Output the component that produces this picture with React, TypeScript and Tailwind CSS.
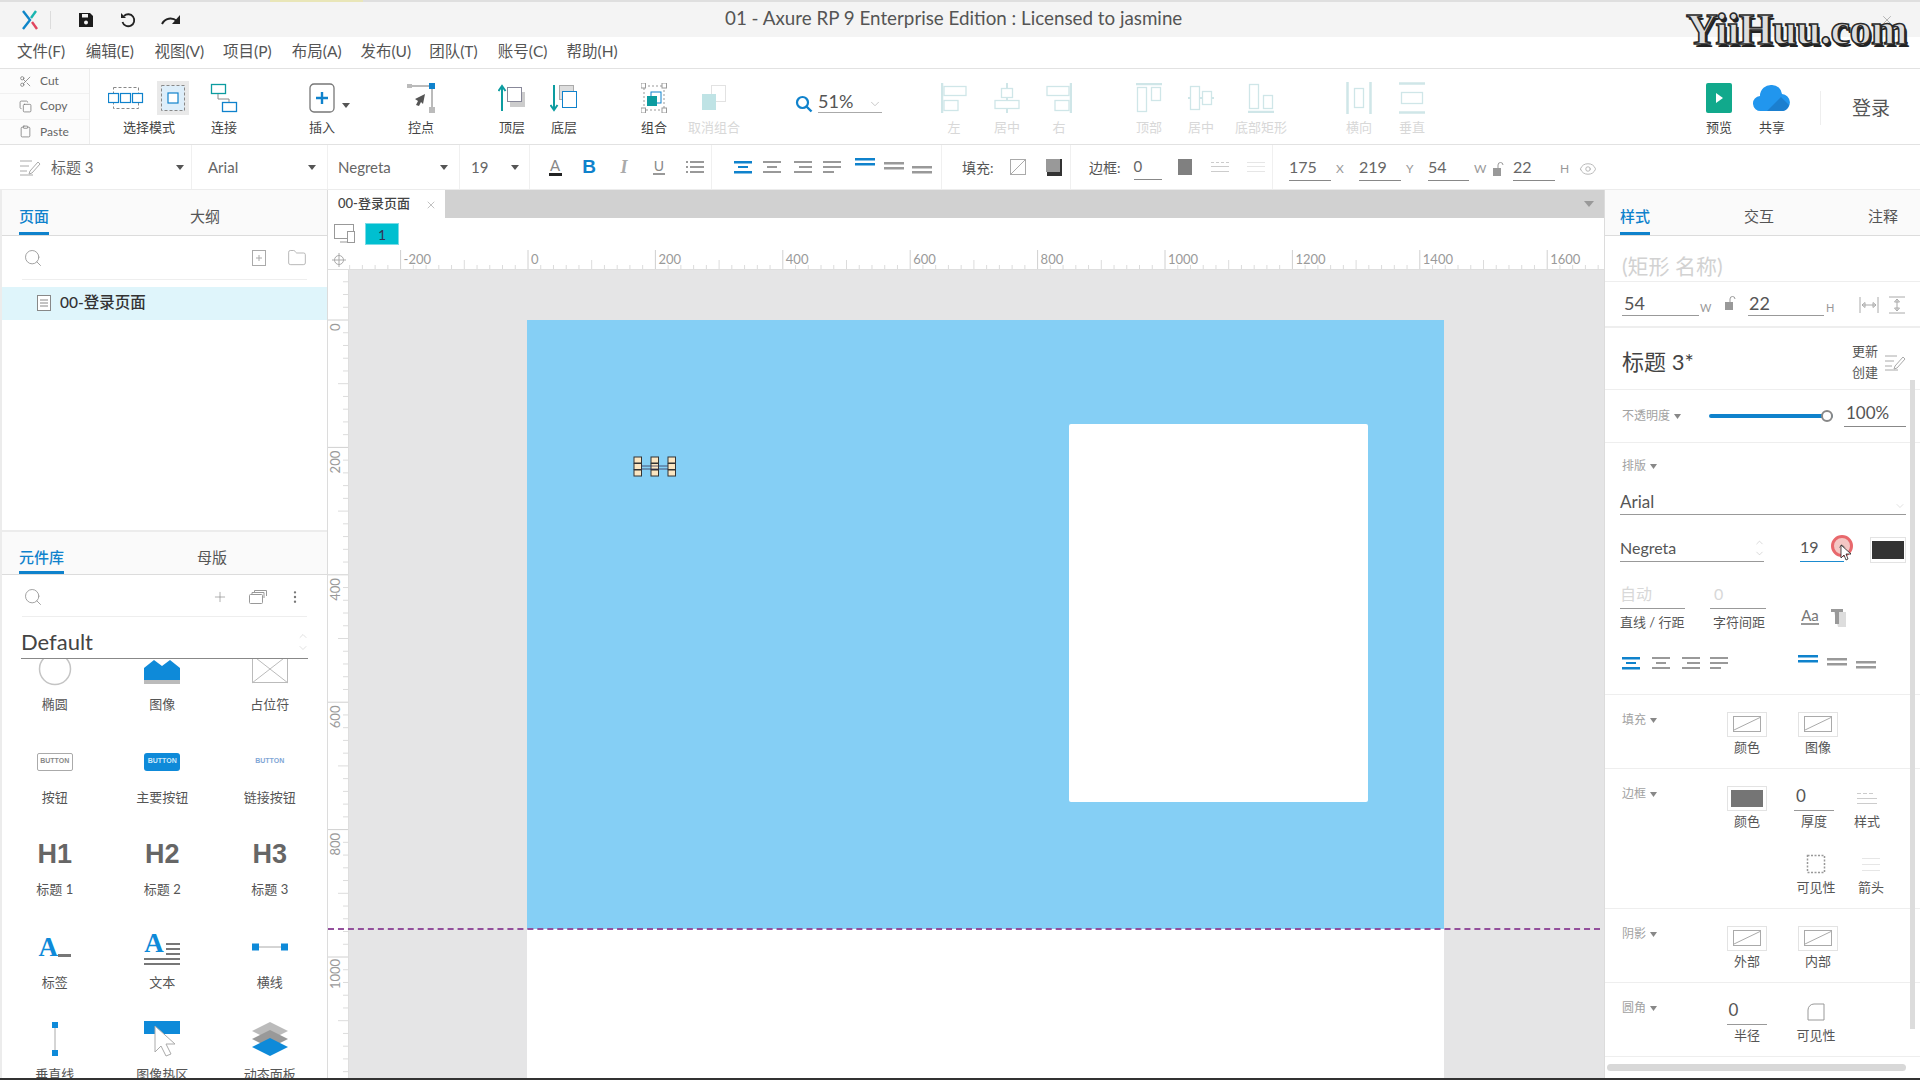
import React from "react";
import { Search, Plus, Eye, Folder, Scissors, Copy, Clipboard, ChevronDown, ChevronUp, EllipsisVertical, X } from "lucide-react";

const BLUE = "#0f82cc";
const TEAL = "#0c9ca0";
const FAINT = "#cfe6e8";

const Caret = ({ className = "" }: { className?: string }) => (
  <svg width="8" height="5" viewBox="0 0 8 5" className={className}><path d="M0 0h8L4 5z" fill="#555" /></svg>
);

const SmallCaret = () => (
  <svg width="7" height="5" viewBox="0 0 7 5" className="ml-[4px] inline-block align-middle"><path d="M0 0h7L3.5 5z" fill="#888" /></svg>
);

const Tool = ({ label, className = "", disabled = false, children }: { label: string; className?: string; disabled?: boolean; children: React.ReactNode }) => (
  <div className={`flex flex-col items-center shrink-0 w-[52px] ${className}`}>
    <div className="h-[38px] mt-[10px] flex items-center justify-center">{children}</div>
    <span className={`mt-[1px] text-[13px] leading-[18px] whitespace-nowrap ${disabled ? "text-[#d8d8d8]" : "text-[#444]"}`}>{label}</span>
  </div>
);

const Lines = ({ rows, color, w = 20 }: { rows: number[][]; color: string; w?: number }) => (
  <svg width={w} height="16" viewBox={`0 0 ${w} 16`}>
    {rows.map((r, i) => (
      <rect key={i} x={r[0]} y={r[1]} width={r[2]} height={r[3] ?? 2} fill={color} />
    ))}
  </svg>
);

const AlignL = ({ color }: { color: string }) => <Lines color={color} rows={[[1, 2, 18, 2.5], [5, 7, 10, 2], [1, 12, 18, 2.5]]} />;
const AlignC = ({ color }: { color: string }) => <Lines color={color} rows={[[1, 2, 18, 2], [5, 7, 10, 2], [1, 12, 18, 2]]} />;
const AlignR = ({ color }: { color: string }) => <Lines color={color} rows={[[1, 2, 18, 2], [6, 7, 13, 2], [1, 12, 18, 2]]} />;
const AlignJ = ({ color }: { color: string }) => <Lines color={color} rows={[[1, 2, 18, 2], [1, 7, 18, 2], [1, 12, 11, 2]]} />;
const VAlign = ({ color }: { color: string }) => <Lines color={color} rows={[[0, 3, 20, 2.5], [0, 8, 20, 2.5]]} />;

const NoFill = ({ w = 28, h = 16 }: { w?: number; h?: number }) => (
  <svg width={w} height={h} viewBox={`0 0 ${w} ${h}`}>
    <rect x=".5" y=".5" width={w - 1} height={h - 1} fill="#fff" stroke="#aaa" />
    <path d={`M1 ${h - 2}L${w - 1} 1.5`} stroke="#aaa" />
  </svg>
);

const Field = ({ value, className = "", text = "text-[#555]" }: { value: string; className?: string; text?: string }) => (
  <div className={`border-b border-[#999] h-[24px] leading-[22px] text-[17px] ${text} ${className}`}>{value}</div>
);

const Swatch = ({ children }: { children: React.ReactNode }) => (
  <div className="w-[40px] h-[25px] border border-[#e3e3e3] flex items-center justify-center bg-white">{children}</div>
);

const Cell = ({ label, children, className = "" }: { label: string; children: React.ReactNode; className?: string }) => (
  <div className={`w-[60px] shrink-0 flex flex-col items-center ${className}`}>
    <div className="h-[28px] flex items-center justify-center w-full">{children}</div>
    <span className="text-[13px] leading-[18px] text-[#555] whitespace-nowrap">{label}</span>
  </div>
);

const SecTitle = ({ title }: { title: string }) => (
  <div className="w-[112px] shrink-0 pl-[17px] pt-[2px] text-[12px] leading-[16px] text-[#a2a2a2]">
    {title}
    <SmallCaret />
  </div>
);

const Item = ({ label, children }: { label: string; children: React.ReactNode }) => (
  <div className="h-[92.5px] flex flex-col items-center shrink-0">
    <div className="mt-[24px] h-[32px] flex items-center justify-center">{children}</div>
    <span className="mt-[10px] text-[13px] leading-[18px] text-[#555] whitespace-nowrap">{label}</span>
  </div>
);

const HRuler = () => {
  const zero = 179;
  const step = 127.4 / 10;
  const ticks = Array.from({ length: 100 }, (_, i) => i - 14);
  return (
    <svg width="1255" height="20" className="block">
      {ticks.map((i) => {
        const x = zero + i * step;
        if (x < 0) return null;
        const major = i % 10 === 0;
        const mid = i % 5 === 0;
        return <line key={i} x1={x} x2={x} y1={major ? 0 : mid ? 10 : 15} y2={20} stroke={major ? "#d0d0d0" : "#dcdcdc"} />;
      })}
      {[-200, 0, 200, 400, 600, 800, 1000, 1200, 1400, 1600].map((v) => (
        <text key={v} x={zero + (v / 200) * 127.4 + 3} y={14} fontSize="13" fill="#9a9a9a" fontFamily="Lato">{v}</text>
      ))}
      <line x1="0" x2="1255" y1="19.5" y2="19.5" stroke="#dedede" />
    </svg>
  );
};

const VRuler = () => {
  const zero = 50;
  const step = 127.4 / 10;
  const ticks = Array.from({ length: 70 }, (_, i) => i - 3);
  return (
    <svg width="21" height="808" className="block">
      {ticks.map((i) => {
        const y = zero + i * step;
        const major = i % 10 === 0;
        const mid = i % 5 === 0;
        return <line key={i} y1={y} y2={y} x1={major ? 0 : mid ? 10 : 15} x2={21} stroke={major ? "#d0d0d0" : "#dcdcdc"} />;
      })}
      {[0, 200, 400, 600, 800, 1000].map((v) => (
        <text key={v} transform={`translate(12 ${zero + (v / 200) * 127.4 + 26 + (v >= 1000 ? 6 : v === 0 ? -15 : 0)}) rotate(-90)`} fontSize="13" fill="#9a9a9a" fontFamily="Lato">{v}</text>
      ))}
      <line x1="20.5" x2="20.5" y1="0" y2="808" stroke="#dedede" />
    </svg>
  );
};

const PanelTab = ({ label, active = false, className = "" }: { label: string; active?: boolean; className?: string }) => (
  <div className={`h-full flex items-center pt-[11px] border-b-[3px] text-[15px] ${active ? "border-[#0f82cc] text-[#0f82cc] font-medium" : "border-transparent text-[#555]"} ${className}`}>{label}</div>
);

export default function App() {
  return (
    <div className="w-[1920px] h-[1080px] overflow-hidden relative flex flex-col bg-white font-['Lato','Noto_Sans_CJK_SC',sans-serif] text-[#444]">
      {/* Title bar */}
      <div className="h-[37px] shrink-0 bg-[#f4f4f4] border-t-[2px] border-[#dfdfdf] flex items-center relative">
        <svg width="22" height="22" viewBox="0 0 22 22" className="ml-[19px]">
          <path d="M4 2l7 9-7 9" fill="none" stroke="#0f86c9" strokeWidth="2.4" />
          <path d="M17 2l-5 7" fill="none" stroke="#19b5b0" strokeWidth="2.4" />
          <path d="M13 13l5 7" fill="none" stroke="#e0455f" strokeWidth="2.4" />
        </svg>
        <div className="ml-[9px] w-px h-[18px] bg-[#dcdcdc]" />
        <svg width="16" height="16" viewBox="0 0 16 16" className="ml-[27px]">
          <path d="M1 1h11l3 3v11H1z" fill="#1c1c1c" />
          <rect x="4" y="2" width="6" height="3.5" fill="#f4f4f4" />
          <circle cx="8" cy="10.5" r="2" fill="#f4f4f4" />
        </svg>
        <svg width="18" height="18" viewBox="0 0 18 18" className="ml-[25px]">
          <path d="M5 5a6 6 0 1 1-1.5 6" fill="none" stroke="#222" strokeWidth="1.8" />
          <path d="M2 2v5h5z" fill="#222" />
        </svg>
        <svg width="22" height="14" viewBox="0 0 22 14" className="ml-[23px]">
          <path d="M2 11c3-6 10-7 15-3" fill="none" stroke="#222" strokeWidth="2" />
          <path d="M20 2v9h-8z" fill="#222" />
        </svg>
        <div className="absolute left-[725px] top-[4px] w-[456px] text-center text-[18.8px] leading-[24px] text-[#555] whitespace-nowrap">01 - Axure RP 9 Enterprise Edition : Licensed to jasmine</div>
        <div className="absolute left-[270px] -top-[2px] w-[93px] h-[2px] bg-[#e9e6b8]" />
      </div>

      {/* Menu bar */}
      <div className="h-[32px] shrink-0 border-b border-[#e2e2e2] flex items-center pl-[17px] pb-[2px] text-[15.5px] text-[#555]">
        {["文件(F)", "编辑(E)", "视图(V)", "项目(P)", "布局(A)", "发布(U)", "团队(T)", "账号(C)", "帮助(H)"].map((m) => (
          <span key={m} className="w-[68.7px] shrink-0 whitespace-nowrap">{m}</span>
        ))}
      </div>

      {/* Toolbar */}
      <div className="h-[76px] shrink-0 border-b border-[#e2e2e2] flex">
        <div className="w-[90px] shrink-0 border-r border-[#ececec] flex flex-col text-[12px] text-[#666]">
          {[["Cut", Scissors], ["Copy", Copy], ["Paste", Clipboard]].map(([t, I]: any) => (
            <div key={t} className="flex-1 flex items-center gap-[8px] pl-[19px] border-b border-[#f1f1f1] last:border-b-0 bg-[#fcfcfc]">
              <I size={13} strokeWidth={1.4} color="#777" />
              <span>{t}</span>
            </div>
          ))}
        </div>

        <Tool label="选择模式" className="ml-[10px] w-[98px]">
          <div className="flex items-center gap-[13px] -ml-[2px]">
            <svg width="36" height="30" viewBox="0 0 36 30">
              <rect x="5.5" y="4.5" width="25" height="21" fill="none" stroke="#888" strokeDasharray="3 2" />
              {[0.5, 12.5, 24.5].map((x) => <rect key={x} x={x} y="10.5" width="10" height="9" fill="#fff" stroke={BLUE} strokeWidth="1.2" />)}
            </svg>
            <div className="w-[32px] h-[34px] bg-[#e9e9e9] flex items-center justify-center">
              <svg width="26" height="28" viewBox="0 0 26 28">
                <rect x="1.5" y="1.5" width="23" height="25" fill="#ddeefa" stroke="#888" strokeDasharray="3 2" />
                <rect x="8" y="9" width="10" height="10" fill="#fff" stroke={BLUE} strokeWidth="1.2" />
              </svg>
            </div>
          </div>
        </Tool>
        <Tool label="连接">
          <svg width="28" height="30" viewBox="0 0 28 30">
            <rect x="1.5" y="1.5" width="14" height="9" fill="none" stroke={TEAL} strokeWidth="1.3" />
            <rect x="12.5" y="19.5" width="14" height="9" fill="none" stroke={BLUE} strokeWidth="1.3" />
            <path d="M8 11v5h11v3" fill="none" stroke="#888" />
          </svg>
        </Tool>
        <Tool label="插入" className="ml-[46px] relative">
          <svg width="26" height="30" viewBox="0 0 26 30">
            <rect x="1" y="1" width="24" height="28" rx="4" fill="#fff" stroke="#777" strokeWidth="1.3" />
            <path d="M13 9v12M7 15h12" stroke={BLUE} strokeWidth="2.4" />
          </svg>
          <Caret className="absolute left-[46px] top-[34px]" />
        </Tool>
        <Tool label="控点" className="ml-[47px]">
          <svg width="28" height="30" viewBox="0 0 28 30">
            <path d="M3 3h22v24" fill="none" stroke="#777" />
            <rect x="0" y="1" width="5" height="4" fill="#bbb" />
            <rect x="22" y="0" width="6" height="6" fill={BLUE} />
            <rect x="22" y="24" width="6" height="6" fill="#bbb" />
            <path d="M18 11L8 16l3 2-2 4 3 1 2-4 2 2z" fill="#555" />
          </svg>
        </Tool>
        <Tool label="顶层" className="ml-[39px]">
          <svg width="28" height="28" viewBox="0 0 28 28">
            <rect x="12" y="8" width="15" height="15" fill="#ccc" />
            <rect x="9.5" y="3.5" width="14" height="14" fill="#fff" stroke="#889" />
            <path d="M4 27V3M0.5 7L4 2l3.5 5" fill="none" stroke={TEAL} strokeWidth="2" />
          </svg>
        </Tool>
        <Tool label="底层">
          <svg width="28" height="28" viewBox="0 0 28 28">
            <rect x="9.5" y="1.5" width="14" height="14" fill="#ddd" stroke="#aaa" />
            <rect x="12.5" y="7.5" width="14" height="16" fill="#fff" stroke={BLUE} />
            <path d="M4 1v24M0.5 21L4 26l3.5-5" fill="none" stroke={TEAL} strokeWidth="2" />
          </svg>
        </Tool>
        <Tool label="组合" className="ml-[38px]">
          <svg width="26" height="30" viewBox="0 0 26 30">
            <rect x="3" y="3" width="20" height="24" fill="none" stroke="#999" strokeDasharray="2 2" />
            {[[0, 0], [21, 0], [0, 25], [21, 25]].map(([x, y]) => <rect key={`${x}${y}`} x={x} y={y} width="4.5" height="5" fill="#fff" stroke="#999" />)}
            <rect x="10" y="9" width="10" height="11" fill="#fff" stroke={BLUE} />
            <rect x="6" y="13" width="10" height="10" fill={TEAL} />
          </svg>
        </Tool>
        <Tool label="取消组合" disabled className="w-[68px]">
          <svg width="26" height="30" viewBox="0 0 26 30">
            <rect x="10.5" y="2.5" width="14" height="16" fill="#fff" stroke="#e2e2e2" />
            <rect x="1" y="11" width="14" height="16" fill="#bfe3e5" />
          </svg>
        </Tool>

        <div className="ml-[47px] w-[87px] shrink-0 flex flex-col">
          <div className="mt-[20px] h-[24px] flex items-center">
            <svg width="18" height="18" viewBox="0 0 18 18" className="mt-[5px]">
              <circle cx="7.5" cy="7.5" r="5.5" fill="none" stroke={BLUE} strokeWidth="2.2" />
              <path d="M11.5 11.5l5 5" stroke={BLUE} strokeWidth="2.4" />
            </svg>
            <div className="ml-[5px] flex-1 flex items-center justify-between border-b border-[#aaa] h-[24px] text-[18px] leading-[22px] text-[#555]">
              51%
              <ChevronDown size={14} color="#bbb" strokeWidth={1.4} className="mt-[6px]" />
            </div>
          </div>
        </div>

        <Tool label="左" disabled className="ml-[46px]">
          <svg width="26" height="30" viewBox="0 0 26 30"><path d="M1 0v30" stroke={FAINT} strokeWidth="2.5" /><rect x="3" y="3.5" width="22" height="9" fill="none" stroke={FAINT} strokeWidth="1.3" /><rect x="3" y="17.5" width="14" height="10" fill="none" stroke={FAINT} strokeWidth="1.3" /></svg>
        </Tool>
        <Tool label="居中" disabled className="ml-[1px]">
          <svg width="26" height="30" viewBox="0 0 26 30"><path d="M13 0v30" stroke={FAINT} strokeWidth="2" /><rect x="7.5" y="5.5" width="11" height="9" fill="#fff" stroke={FAINT} strokeWidth="1.3" /><rect x="1" y="17.5" width="24" height="8" fill="#fff" stroke={FAINT} strokeWidth="1.3" /></svg>
        </Tool>
        <Tool label="右" disabled>
          <svg width="26" height="30" viewBox="0 0 26 30"><path d="M25 0v30" stroke={FAINT} strokeWidth="2.5" /><rect x="1" y="3.5" width="22" height="9" fill="none" stroke={FAINT} strokeWidth="1.3" /><rect x="9" y="17.5" width="14" height="10" fill="none" stroke={FAINT} strokeWidth="1.3" /></svg>
        </Tool>
        <Tool label="顶部" disabled className="ml-[38px]">
          <svg width="26" height="30" viewBox="0 0 26 30"><path d="M0 1h26" stroke={FAINT} strokeWidth="2.5" /><rect x="1.5" y="4.5" width="9" height="24" fill="none" stroke={FAINT} strokeWidth="1.3" /><rect x="15.5" y="4.5" width="9" height="13" fill="none" stroke={FAINT} strokeWidth="1.3" /></svg>
        </Tool>
        <Tool label="居中" disabled>
          <svg width="26" height="30" viewBox="0 0 26 30"><path d="M0 15h26" stroke={FAINT} strokeWidth="2" /><rect x="2.5" y="3.5" width="9" height="23" fill="#fff" stroke={FAINT} strokeWidth="1.3" /><rect x="14.5" y="8.5" width="9" height="13" fill="#fff" stroke={FAINT} strokeWidth="1.3" /></svg>
        </Tool>
        <Tool label="底部矩形" disabled className="w-[68px]">
          <svg width="26" height="30" viewBox="0 0 26 30"><path d="M0 29h26" stroke={FAINT} strokeWidth="2.5" /><rect x="1.5" y="1.5" width="9" height="24" fill="none" stroke={FAINT} strokeWidth="1.3" /><rect x="15.5" y="12.5" width="9" height="13" fill="none" stroke={FAINT} strokeWidth="1.3" /></svg>
        </Tool>
        <Tool label="横向" disabled className="ml-[38px]">
          <svg width="26" height="32" viewBox="0 0 26 32"><path d="M1.5 0v32M24.5 0v32" stroke={FAINT} strokeWidth="2.5" /><rect x="8.5" y="6.5" width="9" height="19" fill="none" stroke={FAINT} strokeWidth="1.3" /></svg>
        </Tool>
        <Tool label="垂直" disabled className="ml-[1px]">
          <svg width="26" height="32" viewBox="0 0 26 32"><path d="M0 1.5h26M0 30.5h26" stroke={FAINT} strokeWidth="2.5" /><rect x="2.5" y="10.5" width="21" height="11" fill="none" stroke={FAINT} strokeWidth="1.3" /></svg>
        </Tool>
        <Tool label="预览" className="ml-[255px]">
          <svg width="26" height="30" viewBox="0 0 26 30"><rect width="26" height="30" rx="2" fill="#11a98c" /><path d="M10 10l7 5-7 5z" fill="#fff" /></svg>
        </Tool>
        <Tool label="共享" className="ml-[1px]">
          <svg width="38" height="28" viewBox="0 0 38 28"><path d="M8 27a7.5 7.5 0 0 1-1-15A11 11 0 0 1 19 1a10 10 0 0 1 10 9 8.6 8.6 0 0 1 1 17z" fill="#2196ee" /><path d="M30 27H14L28 13l8 8a8 8 0 0 1-6 6z" fill="#1b7fcf" /></svg>
        </Tool>
        <div className="ml-[22px] mt-[22px] h-[34px] w-px bg-[#eeeeee]" />
        <div className="ml-[31px] mt-[27px] text-[19px] leading-[24px] text-[#555] whitespace-nowrap">登录</div>
      </div>

      {/* Format bar */}
      <div className="h-[45px] shrink-0 border-b border-[#ececec] flex items-center text-[15px] text-[#666]">
        <div className="w-[192px] h-full shrink-0 flex items-center pl-[19px] border-r border-[#f0f0f0]">
          <svg width="22" height="18" viewBox="0 0 22 18"><path d="M1 3h12M1 8h9M1 13h7M1 17h13M11 13l8-9 2 2-8 9-3 1z" fill="none" stroke="#aaa" /></svg>
          <span className="ml-[10px] w-[44px] whitespace-nowrap">标题 3</span>
          <Caret className="ml-[81px]" />
        </div>
        <div className="w-[136px] h-full shrink-0 flex items-center pl-[16px] border-r border-[#f0f0f0]"><span className="w-[33px]">Arial</span><Caret className="ml-[67px]" /></div>
        <div className="w-[132px] h-full shrink-0 flex items-center pl-[10px] border-r border-[#f0f0f0]"><span className="w-[54px]">Negreta</span><Caret className="ml-[48px]" /></div>
        <div className="w-[70px] h-full shrink-0 flex items-center pl-[11px] border-r border-[#f0f0f0]"><span className="w-[17px]">19</span><Caret className="ml-[23px]" /></div>
        <div className="w-[182px] h-full shrink-0 flex items-center border-r border-[#f0f0f0]">
          <span className="ml-[17px] w-[16px] flex flex-col items-center text-[15px] leading-[14px] text-[#888]">A<span className="w-[13px] h-[3px] bg-[#222] mt-[1px]" /></span>
          <span className="ml-[18px] w-[16px] text-center text-[19px] font-bold text-[#0f82cc] font-['Liberation_Sans',sans-serif]">B</span>
          <span className="ml-[19px] w-[16px] text-center text-[18px] italic font-bold text-[#aaa] font-['Liberation_Serif',serif]">I</span>
          <span className="ml-[19px] w-[16px] flex flex-col items-center text-[14px] leading-[14px] text-[#888]">U<span className="w-[12px] h-[2px] bg-[#999]" /></span>
          <div className="ml-[19px]"><Lines w={18} color="#999" rows={[[0, 2, 2, 2], [4, 2, 14, 2], [0, 7, 2, 2], [4, 7, 14, 2], [0, 12, 2, 2], [4, 12, 14, 2]]} /></div>
        </div>
        <div className="w-[230px] h-full shrink-0 flex items-center border-r border-[#f0f0f0]">
          <div className="ml-[21px]"><AlignL color={BLUE} /></div>
          <div className="ml-[9px]"><AlignC color="#999" /></div>
          <div className="ml-[11px]"><AlignR color="#999" /></div>
          <div className="ml-[9px]"><AlignJ color="#999" /></div>
          <div className="ml-[13px] -mt-[8px]"><VAlign color={BLUE} /></div>
          <div className="ml-[9px]"><VAlign color="#999" /></div>
          <div className="ml-[8px] mt-[8px]"><VAlign color="#999" /></div>
        </div>
        <div className="w-[129px] h-full shrink-0 flex items-center pl-[20px] border-r border-[#f0f0f0]">
          <span className="text-[14px] text-[#555]">填充:</span>
          <div className="ml-[16px]"><svg width="16" height="16" viewBox="0 0 16 16"><rect x=".5" y=".5" width="15" height="15" fill="#fff" stroke="#aaa" /><path d="M1 15L15 1" stroke="#aaa" /></svg></div>
          <div className="ml-[20px]"><svg width="16" height="18" viewBox="0 0 16 18"><rect x="0" y="1" width="14" height="13" fill="#999" /><path d="M14 1h2v17H1v-4h13z" fill="#333" /></svg></div>
        </div>
        <div className="w-[202px] h-full shrink-0 flex items-center pl-[18px] border-r border-[#f0f0f0]">
          <span className="text-[14px] text-[#555]">边框:</span>
          <div className="ml-[13px] w-[28px] h-[24px] mt-[2px] border-b border-[#888] text-[15px] leading-[20px]">0</div>
          <div className="ml-[16px] w-[14px] h-[16px] bg-[#808080]" />
          <div className="ml-[19px]"><Lines w={18} color="#ccc" rows={[[0, 3, 3, 1], [5, 3, 3, 1], [10, 3, 3, 1], [15, 3, 3, 1], [0, 7, 18, 1], [0, 12, 18, 1]]} /></div>
          <div className="ml-[18px]"><Lines w={18} color="#e6e6e6" rows={[[0, 3, 18, 1], [0, 7, 18, 1], [0, 12, 18, 1]]} /></div>
        </div>
        <div className="flex items-center pl-[16px] pt-[4px] text-[16px]">
          <div className="w-[42px] h-[24px] border-b border-[#888] leading-[20px]">175</div>
          <span className="ml-[5px] w-[23px] text-[12px] text-[#999]">X</span>
          <div className="w-[42px] h-[24px] border-b border-[#888] leading-[20px]">219</div>
          <span className="ml-[5px] w-[22px] text-[12px] text-[#999]">Y</span>
          <div className="w-[41px] h-[24px] border-b border-[#888] leading-[20px]">54</div>
          <span className="ml-[5px] w-[18px] text-[12px] text-[#999]">W</span>
          <svg width="12" height="14" viewBox="0 0 12 14"><rect x="1" y="6" width="8" height="8" fill="#999" /><path d="M6 6V3a2.5 2.5 0 0 1 5 0" fill="none" stroke="#999" /></svg>
          <div className="ml-[9px] w-[42px] h-[24px] border-b border-[#888] leading-[20px]">22</div>
          <span className="ml-[5px] w-[19px] text-[12px] text-[#999]">H</span>
          <Eye size={18} strokeWidth={1.1} color="#aaa" />
        </div>
      </div>

      {/* Main */}
      <div className="flex-1 flex min-h-0">
        {/* Left */}
        <div className="w-[328px] shrink-0 flex flex-col border-r border-[#dcdcdc] border-l-2 border-l-[#ececec]">
          <div className="h-[46px] shrink-0 bg-[#fafafa] border-b border-[#dcdcdc] flex pl-[17px]">
            <PanelTab label="页面" active />
            <PanelTab label="大纲" className="ml-[141px]" />
          </div>
          <div className="h-[44px] shrink-0 mx-[20px] border-b border-[#eeeeee] flex items-center">
            <Search size={20} strokeWidth={1.1} color="#999" className="ml-[1px]" />
            <svg width="14" height="16" viewBox="0 0 14 16" className="ml-[209px]"><rect x=".5" y=".5" width="13" height="15" fill="none" stroke="#aaa" /><path d="M7 5v6M4 8h6" stroke="#aaa" /></svg>
            <Folder size={20} strokeWidth={1} color="#aaa" className="ml-[21px]" />
          </div>
          <div className="mt-[7px] h-[33px] shrink-0 bg-[#dff5fb] flex items-center pl-[35px] pb-[2px] text-[15.5px] font-medium text-[#333]">
            <svg width="14" height="16" viewBox="0 0 14 16"><rect x=".5" y=".5" width="13" height="15" fill="#fff" stroke="#888" /><path d="M3 5h8M3 8h8M3 11h8" stroke="#888" /></svg>
            <span className="ml-[9px]">00-登录页面</span>
          </div>
          <div className="h-[210px] shrink-0" />
          <div className="h-[45px] shrink-0 bg-[#fafafa] border-t-[2px] border-t-[#ececec] border-b border-[#dcdcdc] flex pl-[17px]">
            <PanelTab label="元件库" active />
            <PanelTab label="母版" className="ml-[133px]" />
          </div>
          <div className="h-[42px] shrink-0 mx-[20px] border-b border-[#eeeeee] flex items-center pt-[2px]">
            <Search size={20} strokeWidth={1.1} color="#999" className="ml-[1px]" />
            <Plus size={16} strokeWidth={1} color="#888" className="ml-[169px]" />
            <svg width="18" height="14" viewBox="0 0 18 14" className="ml-[21px]"><rect x=".5" y="4.5" width="13" height="9" rx="1" fill="#fff" stroke="#999" /><path d="M3 4V2.5h12V8M5.5 2V.5h12V6" fill="none" stroke="#999" /></svg>
            <EllipsisVertical size={16} strokeWidth={1.6} color="#777" className="ml-[20px]" />
          </div>
          <div className="h-[42px] shrink-0 mx-[19px] border-b border-[#888] flex items-center justify-between pt-[8px] text-[22px] text-[#444]">
            Default
            <div className="flex flex-col mr-[-1px] text-[#ccc]"><ChevronUp size={12} strokeWidth={1.2} /><ChevronDown size={12} strokeWidth={1.2} /></div>
          </div>
          <div className="flex-1 min-h-0 overflow-hidden">
            <div className="grid grid-cols-[107.5px_107.5px_107.5px] -mt-[30px] -ml-[1px]">
              <Item label="椭圆"><svg width="34" height="34" viewBox="0 0 34 34"><circle cx="17" cy="17" r="15.5" fill="none" stroke="#c4c4c4" strokeWidth="1.5" /></svg></Item>
              <Item label="图像"><svg width="36" height="30" viewBox="0 0 36 30"><rect width="36" height="30" fill="#fff" /><path d="M0 14l10-8 8 6 8-6 10 8v12H0z" fill="#0e8ad9" /><rect y="26" width="36" height="4" fill="#bbb" /></svg></Item>
              <Item label="占位符"><svg width="36" height="30" viewBox="0 0 36 30"><rect x=".5" y=".5" width="35" height="28" fill="#fff" stroke="#bbb" /><path d="M0 1l36 28M36 1L0 29" stroke="#bbb" /></svg></Item>
              <Item label="按钮"><div className="w-[36px] h-[18px] rounded-[2px] border border-[#aaa] text-[7px] font-bold text-[#888] flex items-center justify-center font-['Liberation_Sans',sans-serif]">BUTTON</div></Item>
              <Item label="主要按钮"><div className="w-[36px] h-[18px] rounded-[3px] bg-[#0e8ad9] text-[7px] font-bold text-[#cbe8fa] flex items-center justify-center font-['Liberation_Sans',sans-serif]">BUTTON</div></Item>
              <Item label="链接按钮"><div className="w-[36px] h-[18px] text-[7px] font-bold text-[#7fa6d6] flex items-center justify-center font-['Liberation_Sans',sans-serif]">BUTTON</div></Item>
              {["1", "2", "3"].map((n) => (
                <Item key={n} label={`标题 ${n}`}><span className="text-[27px] font-bold leading-[32px] text-[#666] font-['Liberation_Sans',sans-serif]">H{n}</span></Item>
              ))}
              <Item label="标签">
                <div className="flex items-end">
                  <span className="text-[27px] font-bold leading-[26px] text-[#0e8ad9] font-['Liberation_Serif',serif]">A</span>
                  <span className="w-[13px] h-[3px] bg-[#777] mb-[3px]" />
                </div>
              </Item>
              <Item label="文本">
                <div className="relative w-[36px] h-[36px] flex flex-col justify-end">
                  <div className="flex items-end h-[24px]">
                    <span className="text-[27px] font-bold leading-[24px] text-[#0e8ad9] font-['Liberation_Serif',serif]">A</span>
                    <div className="ml-[2px] flex-1 flex flex-col gap-[3px]"><span className="h-[2px] bg-[#777]" /><span className="h-[2px] bg-[#777]" /><span className="h-[2px] bg-[#777]" /></div>
                  </div>
                  <span className="h-[2px] bg-[#777] mt-[3px]" />
                  <span className="h-[2px] bg-[#777] mt-[3px]" />
                </div>
              </Item>
              <Item label="横线"><svg width="36" height="8" viewBox="0 0 36 8"><path d="M3 4h30" stroke="#aaa" /><rect width="7" height="7" y=".5" fill="#0e8ad9" /><rect x="29" y=".5" width="7" height="7" fill="#0e8ad9" /></svg></Item>
              <Item label="垂直线"><svg width="8" height="34" viewBox="0 0 8 34"><path d="M4 3v28" stroke="#aaa" /><rect x="1" width="6" height="6" fill="#0e8ad9" /><rect x="1" y="28" width="6" height="6" fill="#0e8ad9" /></svg></Item>
              <Item label="图像热区"><svg width="36" height="36" viewBox="0 0 36 36"><rect width="36" height="13" fill="#0e8ad9" /><path d="M11 5v26l6-6 5 10 5-2-5-10h9z" fill="#fff" stroke="#aaa" /></svg></Item>
              <Item label="动态面板"><svg width="36" height="34" viewBox="0 0 36 34"><path d="M18 0l18 9-18 9L0 9z" fill="#bbb" /><path d="M18 8l18 9-18 9L0 17z" fill="#999" /><path d="M18 16l18 9-18 9L0 25z" fill="#0e8ad9" /></svg></Item>
            </div>
          </div>
        </div>

        {/* Center */}
        <div className="w-[1276px] shrink-0 flex flex-col min-h-0">
          <div className="h-[28px] shrink-0 bg-[#d1d1d1] flex items-stretch">
            <div className="w-[117px] bg-white flex items-center pl-[10px] text-[13px] text-[#444] font-medium whitespace-nowrap">
              00-登录页面
              <X size={12} strokeWidth={1.2} color="#999" className="ml-[15px] mt-[2px]" />
            </div>
            <div className="flex-1 flex items-center justify-end pr-[10px]"><svg width="10" height="6" viewBox="0 0 10 6"><path d="M0 0h10L5 6z" fill="#999" /></svg></div>
          </div>
          <div className="h-[32px] shrink-0 flex items-center pl-[6px]">
            <svg width="21" height="20" viewBox="0 0 21 20"><rect x=".5" y=".5" width="19" height="14" fill="#fff" stroke="#999" /><path d="M6 18h8" stroke="#999" /><rect x="13.5" y="7.5" width="7" height="11" fill="#fff" stroke="#999" /></svg>
            <div className="ml-[10px] w-[34px] h-[22px] bg-[#00bfd0] border border-[#7adbe6] text-[14px] text-[#335] flex items-center justify-center">1</div>
          </div>
          <div className="h-[20px] shrink-0 flex bg-white">
            <div className="w-[21px] h-[20px] flex items-center justify-center border-b border-[#dedede]">
              <svg width="14" height="14" viewBox="0 0 14 14"><circle cx="7" cy="7" r="4.5" fill="none" stroke="#aaa" /><path d="M7 0v14M0 7h14" stroke="#aaa" /></svg>
            </div>
            <HRuler />
          </div>
          <div className="flex-1 min-h-0 flex relative">
            <VRuler />
            <div className="flex-1 min-h-0 bg-[#e5e5e6] pl-[178px] pt-[50px] flex flex-col overflow-hidden">
              <div className="w-[917px] h-[609px] shrink-0 bg-[#85cff5] flex justify-end pt-[104px] pr-[76px]">
                <div className="w-[299px] h-[378px] bg-white rounded-[2px]" />
              </div>
              <div className="w-[917px] flex-1 bg-white" />
            </div>
            {/* selected widget */}
            <svg width="44" height="22" viewBox="0 0 44 22" className="absolute left-[305px] top-[186px]">
              {[1, 18, 35].map((x) =>
                [1, 7.5, 14].map((y) => <rect key={`${x}${y}`} x={x} y={y} width="7.5" height="6" fill="#fbe6c2" stroke="#333" />)
              )}
              <path d="M8 10h27M8 13h27" stroke="#335" strokeWidth="0.8" />
            </svg>
            {/* page fold guide */}
            <div className="absolute left-0 right-[4px] top-[658px] border-t-[2px] border-dashed border-[#93509c]" />
          </div>
        </div>

        {/* Right */}
        <div className="flex-1 min-w-0 flex flex-col border-l border-[#dcdcdc] relative">
          <div className="h-[46px] shrink-0 bg-[#fafafa] border-b border-[#dcdcdc] flex pl-[15px]">
            <PanelTab label="样式" active />
            <PanelTab label="交互" className="ml-[94px]" />
            <PanelTab label="注释" className="ml-[94px]" />
          </div>
          <div className="h-[46px] shrink-0 border-b border-[#eeeeee] flex items-center pl-[17px] pt-[14px] text-[21px] text-[#d2d2d2] whitespace-nowrap">(矩形 名称)</div>
          <div className="h-[46px] shrink-0 border-b-[2px] border-[#eeeeee] flex items-start pt-[10px] pl-[17px]">
            <Field value="54" className="w-[77px] pl-[2px] text-[18px]" />
            <span className="ml-[1px] mt-[8px] w-[11px] text-[11px] text-[#999]">W</span>
            <svg width="12" height="14" viewBox="0 0 12 14" className="ml-[13px] mt-[4px]"><rect x="1" y="6" width="8" height="8" fill="#999" /><path d="M6 6V3a2.5 2.5 0 0 1 5 0" fill="none" stroke="#999" /></svg>
            <Field value="22" className="ml-[12px] w-[76px] pl-[1px] text-[18px]" />
            <span className="ml-[2px] mt-[8px] w-[8px] text-[11px] text-[#999]">H</span>
            <svg width="20" height="18" viewBox="0 0 20 18" className="ml-[25px] mt-[4px]"><path d="M1 1v16M19 1v16M3 9h14M3 9l3-2.5v5zM17 9l-3-2.5v5z" fill="none" stroke="#aaa" /></svg>
            <svg width="18" height="18" viewBox="0 0 18 18" className="ml-[9px] mt-[4px]"><path d="M1 1h16M1 17h16M9 3v12M9 3L6.5 6h5zM9 15l-2.5-3h5z" fill="none" stroke="#aaa" /></svg>
          </div>
          <div className="h-[62px] shrink-0 border-b border-[#eeeeee] flex items-center pl-[17px] pt-[6px]">
            <span className="text-[22px] text-[#444] whitespace-nowrap w-[64px]">标题 3*</span>
            <div className="ml-[166px] flex flex-col text-[13px] leading-[21px] text-[#555]"><span>更新</span><span>创建</span></div>
            <svg width="22" height="18" viewBox="0 0 22 18" className="ml-[6px]"><path d="M1 3h12M1 8h9M1 13h7M1 17h13M11 13l8-9 2 2-8 9-3 1z" fill="none" stroke="#aaa" /></svg>
          </div>
          <div className="h-[53px] shrink-0 border-b border-[#eeeeee] flex items-center pl-[17px]">
            <span className="w-[87px] text-[12px] text-[#a2a2a2] whitespace-nowrap">不透明度<SmallCaret /></span>
            <div className="w-[124px] h-[4px] bg-[#0f82cc] rounded-full relative">
              <div className="absolute right-0 -top-[4px] w-[12px] h-[12px] rounded-full bg-white border-2 border-[#888]" />
            </div>
            <div className="ml-[11px] w-[62px] h-[26px] border-b border-[#888] text-[17px] leading-[24px] text-[#555] pl-[2px] mt-[-4px]">100%</div>
          </div>
          <div className="h-[252px] shrink-0 border-b border-[#eeeeee] pl-[15px] pr-[14px] flex flex-col relative">
            <div className="mt-[15px] h-[16px] pl-[2px] text-[12px] leading-[16px] text-[#a2a2a2]">排版<SmallCaret /></div>
            <div className="mt-[16px] h-[25px] border-b border-[#999] flex items-center justify-between text-[17px] text-[#555]">Arial<ChevronDown size={12} strokeWidth={1.2} color="#ccc" className="mt-[8px]" /></div>
            <div className="mt-[19px] flex items-start">
              <div className="w-[144px] h-[28px] border-b border-[#999] flex items-center justify-between text-[16px] text-[#555]">Negreta
                <div className="flex flex-col text-[#bbb] mr-[-1px]"><ChevronUp size={11} strokeWidth={1.2} /><ChevronDown size={11} strokeWidth={1.2} /></div>
              </div>
              <div className="ml-[36px] w-[44px] h-[28px] border-b border-[#1b8bcf] text-[16px] leading-[26px] text-[#555]">19</div>
              <div className="ml-[26px] mt-[3px] w-[36px] h-[26px] border border-[#e3e3e3] flex items-center justify-center"><div className="w-[32px] h-[18px] bg-[#333]" /></div>
            </div>
            <div className="mt-[18px] flex items-start text-[16px] text-[#d8d8d8]">
              <div className="flex flex-col w-[65px]"><div className="h-[28px] border-b border-[#999] leading-[26px]">自动</div><span className="mt-[4px] text-[13px] leading-[18px] text-[#555] whitespace-nowrap">直线 / 行距</span></div>
              <div className="ml-[25px] flex flex-col w-[56px]"><div className="h-[28px] border-b border-[#999] leading-[26px] pl-[4px]">0</div><span className="mt-[4px] text-[13px] leading-[18px] text-[#555] whitespace-nowrap pl-[3px]">字符间距</span></div>
              <div className="ml-[35px] mt-[26px] flex flex-col items-center text-[15px] leading-[16px] text-[#777]">Aa<span className="w-[18px] h-[2px] bg-[#999]" /></div>
              <svg width="18" height="20" viewBox="0 0 18 20" className="ml-[11px] mt-[27px]"><path d="M4 4h12v15H8z" fill="#ddd" /><path d="M1 1h12v3H9v12H5V4H1z" fill="#999" /></svg>
            </div>
            <div className="mt-[21px] flex items-center">
              <div className="ml-[1px]"><AlignL color={BLUE} /></div>
              <div className="ml-[10px]"><AlignC color="#999" /></div>
              <div className="ml-[10px]"><AlignR color="#999" /></div>
              <div className="ml-[8px]"><AlignJ color="#999" /></div>
              <div className="ml-[69px] -mt-[6px]"><VAlign color={BLUE} /></div>
              <div className="ml-[9px]"><VAlign color="#999" /></div>
              <div className="ml-[9px] mt-[6px]"><VAlign color="#999" /></div>
            </div>
            {/* pressed spinner with pointer */}
            <div className="absolute left-[226px] top-[92px] w-[22px] h-[22px] rounded-full border-[3px] border-[#e8686c] bg-[#f4c7c4] flex items-center justify-center">
              <ChevronUp size={10} color="#555" />
            </div>
            <svg width="14" height="18" viewBox="0 0 14 18" className="absolute left-[235px] top-[101px]"><path d="M1 1v13l3-3 2 5 2-1-2-5h5z" fill="#fff" stroke="#222" strokeWidth="0.8" /></svg>
          </div>
          <div className="h-[74px] shrink-0 border-b border-[#eeeeee] flex pt-[15px]">
            <SecTitle title="填充" />
            <Cell label="颜色"><Swatch><NoFill /></Swatch></Cell>
            <Cell label="图像" className="ml-[11px]"><Swatch><NoFill /></Swatch></Cell>
          </div>
          <div className="h-[140px] shrink-0 border-b border-[#eeeeee] pt-[15px] flex flex-col">
            <div className="flex">
              <SecTitle title="边框" />
              <Cell label="颜色"><Swatch><div className="w-[32px] h-[17px] bg-[#757575]" /></Swatch></Cell>
              <Cell label="厚度" className="ml-[7px]"><Field value="0" className="w-[40px] h-[26px] pl-[2px]" /></Cell>
              <Cell label="样式" className="ml-[-7px]"><Lines w={20} color="#ccc" rows={[[0, 3, 4, 1], [6, 3, 4, 1], [12, 3, 4, 1], [0, 8, 20, 1], [0, 13, 20, 1]]} /></Cell>
            </div>
            <div className="flex mt-[20px] pl-[181px]">
              <Cell label="可见性"><svg width="20" height="20" viewBox="0 0 20 20"><rect x="1.5" y="1.5" width="17" height="17" fill="none" stroke="#999" strokeWidth="1.5" strokeDasharray="2 1.5" /></svg></Cell>
              <Cell label="箭头" className="ml-[-5px]"><Lines w={18} color="#e6e6e6" rows={[[0, 2, 18, 1], [0, 8, 18, 1], [0, 14, 18, 1]]} /></Cell>
            </div>
          </div>
          <div className="h-[74px] shrink-0 border-b border-[#eeeeee] flex pt-[15px]">
            <SecTitle title="阴影" />
            <Cell label="外部"><Swatch><NoFill /></Swatch></Cell>
            <Cell label="内部" className="ml-[11px]"><Swatch><NoFill /></Swatch></Cell>
          </div>
          <div className="h-[74px] shrink-0 border-b border-[#eeeeee] flex pt-[15px]">
            <SecTitle title="圆角" />
            <Cell label="半径"><Field value="0" className="w-[40px] h-[26px] pl-[2px] -ml-[1px]" /></Cell>
            <Cell label="可见性" className="ml-[9px]"><svg width="18" height="18" viewBox="0 0 18 18"><path d="M1 17V7a6 6 0 0 1 6-6h10v16z" fill="none" stroke="#999" /></svg></Cell>
          </div>
          <div className="flex-1 flex items-center pl-[2px]">
            <div className="w-[299px] h-[7px] bg-[#d8d8d8] rounded-sm" />
          </div>
          <div className="absolute right-[5px] top-[190px] w-[5px] h-[649px] bg-[#dcdcdc]" />
        </div>
      </div>

      <div className="h-[2px] shrink-0 bg-[#333]" />

      {/* Window controls + watermark overlay */}
      <div className="absolute right-[28px] top-[13px] w-[12px] h-[12px]"><X size={14} strokeWidth={1} color="#888" /></div>
      <div className="absolute left-[1686px] top-[4px] text-[44px] leading-[52px] font-bold tracking-[-0.6px] whitespace-nowrap text-[#dedede] font-['Liberation_Serif',serif] [-webkit-text-stroke:1.6px_#2a2a2a] [text-shadow:2px_3px_0_#222]">YiiHuu.com</div>
    </div>
  );
}
